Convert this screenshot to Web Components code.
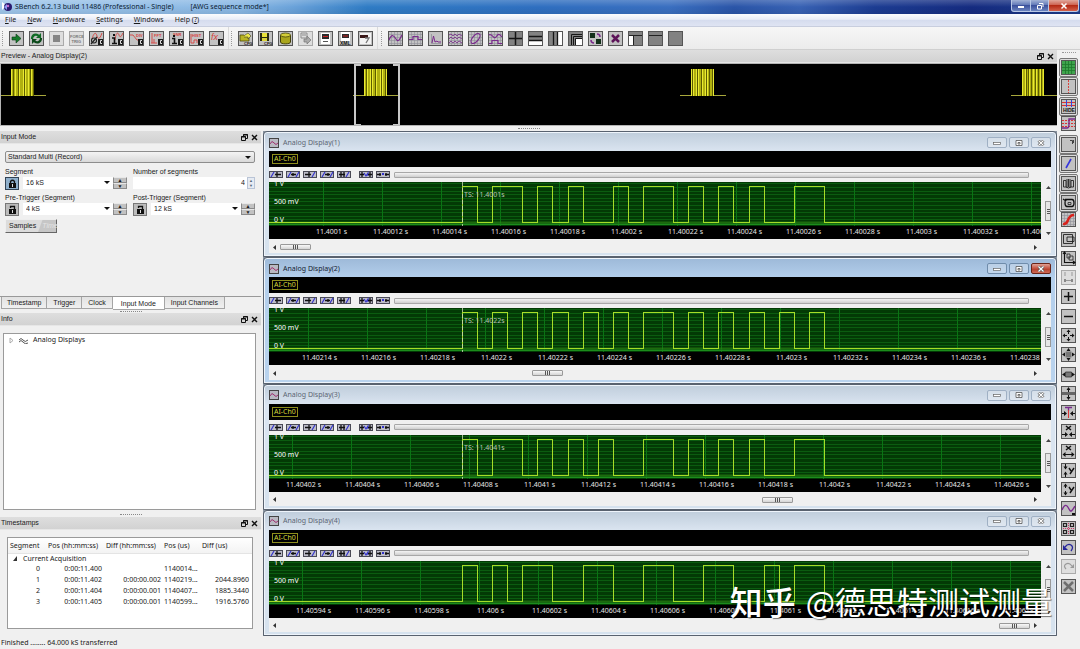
<!DOCTYPE html>
<html lang="en">
<head>
<meta charset="utf-8">
<title>SBench 6</title>
<style>
html,body{margin:0;padding:0}
body{font-family:"Noto Sans","Noto Sans CJK SC",sans-serif;font-size:7px;line-height:10px;color:#1a1a1a;background:#f0f0f0}
</style>
</head>
<body>
<sb-app></sb-app>
<script>
const BASE = `*{box-sizing:border-box}button,select,input{font:inherit;color:inherit;margin:0;padding:0;border:0;background:none;border-radius:0;outline:0}button{display:block}svg{display:block}`;
function define(name, html, setup){
  const tpl = document.createElement('template');
  customElements.define(name, class extends HTMLElement{
    constructor(){
      super();
      tpl.innerHTML = '<style>' + BASE + '</style>' + (typeof html === 'function' ? html(this) : html);
      this.attachShadow({mode:'open'}).append(tpl.content.cloneNode(true));
      if (setup) setup(this, this.shadowRoot);
    }
  });
}
const t = (x,y,s,c='#222',z=4,extra='') => `<text x="${x}" y="${y}" font-size="${z}" font-weight="700" fill="${c}" ${extra}>${s}</text>`;
const p = (d,c='#111',w=1,f='none') => `<path d="${d}" stroke="${c}" stroke-width="${w}" fill="${f}"/>`;
const r = (x,y,w,h,c='#111') => `<rect x="${x}" y="${y}" width="${w}" height="${h}" fill="${c}"/>`;
const mesh = p('M3.5 1V14M6.5 1V14M9.5 1V14M12.5 1V14M1 3.5H14M1 6.5H14M1 9.5H14M1 12.5H14','#8f8f98',.6);
const cbox = r(9,8,5,6,'#1c1c1c') + p('M13 9.500H11.500V12.500H13','#ddd',1);
const PUR='#7a2a8c', RED='#d8423e';
const ICONS = {
  play: p('M3 6H7V3L12 7.500L7 12V9H3Z','#0c3a14',.6,'#157a2a'),
  loop: p('M3 8C3 4 7 2 10 5','#0f6a24',2.200)+p('M12 2V7H7Z','none',0,'#0f6a24')+p('M12 7C12 11 8 13 5 10','#0b4a1a',2.200)+p('M3 13V8H8Z','none',0,'#0b4a1a'),
  stop: r(4,4,7,7,'#858585'),
  force: t(1,6.500,'FORCE','#777',4)+t(2.500,12,'TRIG','#777',4),
  osc: p('M3 8C5 1 7 1 8 5S11 8 13 2',RED,.9)+p('M2 13L8 6','#222',1.200)+'<circle cx="5" cy="9.500" r="2.500" fill="none" stroke="#222" stroke-width="1.100"/>'+cbox,
  info: p('M6 9C7 1 9 1 10 4S12 6 14 2',RED,.9)+r(4,3,2,2)+p('M3 7H5.500V12M3 12.500H8','#111',1.600)+cbox,
  div: p('M1 4H4L8 9H10',RED,.9)+t(7,5.500,'DIV',RED,4)+cbox,
  fft: p('M2 12H8M3 2V12M5 8V12',RED,.9)+t(5,6,'FFT',RED,4)+cbox,
  snr: t(4,5,'SNR',RED,4)+r(4,4,2,2)+p('M3 7.500H5.500V12M3 12.500H8','#111',1.600)+cbox,
  hist: t(3,5.500,'HIST',RED,4)+p('M2 3V12H5V9H8V12',RED,.9)+cbox,
  fx: `<text x="2" y="9" font-size="9" font-style="italic" fill="${RED}">fx</text>`+cbox,
  open: p('M2 4H6L7 5H11V10H2Z','#4c4a08',.8,'#b8b424')+p('M7 4L10 2L13 5L10 8V6H6','#222',.5,'#ebe84a')+t(6,13.500,'CFG','#111',4),
  save: r(2,2,9,8,'#2a2a10')+r(4,2,5,4,'#e8e23a')+r(4,7,5,3,'#dbd43a')+t(6,13.500,'CFG','#111',4),
  disk: '<path d="M2.500 4V11C2.500 13.500 12.500 13.500 12.500 11V4" fill="#a9a51c" stroke="#44420a"/><ellipse cx="7.500" cy="4" rx="5" ry="2" fill="#d3ce39" stroke="#44420a" stroke-width=".8"/>',
  send: p('M3 2H9V7H3ZM4 4H8','#8c8c8c')+p('M6 8H9V5L13 9L9 13V11H6Z','#777',.7,'#aaa'),
  doc: r(3,2,9,11,'#fff')+r(4,3,7,5,'#2b2b2b')+p('M5 5.500H10','#c22')+p('M5 10.500H10','#555'),
  xml: r(3,1,9,9,'#fff')+r(4,3,7,4,'#2b2b2b')+p('M5 5H10','#c22')+t(2,13.500,'XML','#111',5),
  exp: r(2,2,11,11,'#f3f3f3')+r(2,4,8,3,'#3a1818')+p('M7 7H11L8 12','#777',1.300),
  sine: mesh+p('M1 9C4 2 6 5 8 8S11 10 14 4',PUR,1.200),
  square: mesh+p('M1 8.500H5V5.500H10V8.500H14',PUR,1.200),
  spec: p('M3.500 3V12.500H13','#8a8a92',.7)+p('M4 12L5.500 5L7 11L9 10L10 11H13',PUR),
  noise: mesh+p('M1 4L3 3L5 5L7 3L9 5L11 3L14 5M1 8L3 6L5 8L7 6L9 8L11 6L14 8M1 12L3 10L5 12L7 10L9 12L11 10L14 12',PUR,.8),
  ellipse: mesh+'<ellipse cx="7.500" cy="7.500" rx="6" ry="3" transform="rotate(-50 7.500 7.500)" fill="none" stroke="#7a2a8c" stroke-width="1.200"/>',
  mixed: mesh+p('M1 4C4 2 6 9 8 6S11 2 14 6M1 12.500H4V9.500H10V12.500H14',PUR,1.200),
  quad: r(1,1,13,13,'#828282')+p('M7.500 1V14M1 7.500H14','#151515',1.500),
  rows: r(1,1,13,13,'#828282')+r(1,10,13,4,'#fff')+p('M1 5.500H14M1 9.500H14','#151515',1.300),
  cols: r(1,1,13,13,'#828282')+r(10,1,4,13,'#fff')+p('M5.500 1V14M9.500 1V14','#151515',1.300),
  casc: r(1,1,13,13,'#828282')+r(8,7,6,7,'#fff')+p('M3.500 14V3.500H14M5.500 14V5.500H14M7.500 14V7.500H14','#151515',1),
  swap: r(2,2,5,5,'#12301a')+r(8,8,5,5,'#12301a')+p('M9 3Q12 3 12 6M3 9Q3 12 6 12',PUR,1.500),
  close: p('M4 4L11 11M11 4L4 11','#5d1459',2.500),
  layl: r(1,1,13,13,'#828282')+r(1,5,4,9,'#fff')+p('M1 4.500H14M5.500 5V14','#222',1),
  layt: r(1,1,13,13,'#828282')+p('M1 4.500H14','#222',1),
  plain: r(1,1,13,13,'#828282'),
  grid: r(1,1,13,13,'#3fa34d')+p('M4.500 1V14M7.500 1V14M10.500 1V14M1 4.500H14M1 7.500H14M1 10.500H14','#1d7a2c',.8),
  cursor: '<path d="M7.500 1V14" stroke="#d8423e" stroke-dasharray="2 1"/>',
  hide: p('M1 3.500H14M1 6.500H14','#d33')+p('M5.500 1V8M10.500 1V8','#34d')+t(2,13,'HIDE','#111',5),
  thresh: '<path d="M1 4.500H14M1 7.500H14M1 10.500H14" stroke="#d33" stroke-dasharray="2 1"/>'+p('M1 12H6Q8 12 8 8V3H14',PUR,1.400),
  note: p('M9 3.500H11.500V7M12.500 3V6','#333',.9),
  slope: p('M5 12L10 3','#3434dd',1.600),
  book: p('M2.500 4.500H5V11H2.500ZM10 4.500H12.500V11H10ZM6 3V12M9 3V12M5 11Q7.500 13 10 11M7.500 3V11','#222',.9),
  cam: p('M2 4L5 6M4 4.500H11Q13 4.500 13 8T11 11.500H6Q4 11.500 4 8T6 5','#111',1.300)+p('M7 7.500H10V9.500H7Z','#222',.8),
  sred: mesh+p('M2 12C9 13 5 3 13 3','#d8231d',2.500),
  frame: p('M2.500 2.500H11.500V11.500H2.500ZM6 5H13V9.500H6Z','#222',.9),
  axes: p('M3.500 1V11.500H14M2 3L3.500 1L5 3M12 10L14 11.500L12 13','#111',1.100)+p('M6 3H9V7H6ZM9 5H12V9H8V5','#222',.8),
  dim: p('M4 2V6M11 2V6M3 10.500H12','#999')+r(3,9,2,3,'#888')+r(10,9,2,3,'#888'),
  plus: p('M7.500 3V12M3 7.500H12','#111',1.500),
  minus: p('M3 7.500H12','#111',1.500),
  move: p('M7.500 3V6M7.500 9V12M3 7.500H6M9 7.500H12','#111',1)+p('M5.500 4L7.500 1.500L9.500 4ZM5.500 11L7.500 13.500L9.500 11ZM4 5.500L1.500 7.500L4 9.500ZM11 5.500L13.500 7.500L11 9.500Z','none',0,'#111'),
  fit: r(4.500,4.500,6,6,'#777')+p('M5.500 4L7.500 1L9.500 4ZM5.500 11L7.500 14L9.500 11ZM4 5.500L1 7.500L4 9.500ZM11 5.500L14 7.500L11 9.500Z','none',0,'#111'),
  fith: r(4.500,5,6,5,'#777')+p('M4.500 5H10.500V10H4.500Z','#222',.7)+p('M4 5.500L1 7.500L4 9.500ZM11 5.500L14 7.500L11 9.500Z','none',0,'#111'),
  fitv: r(1,6,13,3,'#666')+p('M7.500 2V6M7.500 9V13','#111')+p('M5.500 4L7.500 1L9.500 4ZM5.500 11L7.500 14L9.500 11Z','none',0,'#111'),
  trig: p('M4 2.500H11M7.500 2V6',PUR,1.300)+p('M7.500 5V13','#d33')+p('M1 8H3V6L6 8.500L3 11V9H1ZM14 8H12V6L9 8.500L12 11V9H14Z','none',0,'#111'),
  xin: p('M5 2L10 6M10 2L5 6','#111',1.500)+p('M1 10.500H6M9 10.500H14','#111',1)+p('M4 8L7 10.500L4 13ZM11 8L8 10.500L11 13Z','none',0,'#111'),
  xout: p('M5 2L10 6M10 2L5 6','#111',1.500)+p('M3 10.500H12','#111',1)+p('M4.500 8L1.500 10.500L4.500 13ZM10.500 8L13.500 10.500L10.500 13Z','none',0,'#111'),
  yin: p('M8 5L10 8M13 5L9 11','#111',1.400)+p('M4.500 1V6M4.500 9V14','#111',1)+p('M2.500 3.500L4.500 6.500L6.500 3.500ZM2.500 11.500L4.500 8.500L6.500 11.500Z','none',0,'#111'),
  yout: p('M8 5L10 8M13 5L9 11','#111',1.400)+p('M4.500 2V6M4.500 9V13','#111',1)+p('M2.500 4.500L4.500 1.500L6.500 4.500ZM2.500 10.500L4.500 13.500L6.500 10.500Z','none',0,'#111'),
  wave: p('M1 9C4 2 6 4 8 8S11 10 14 5',PUR,1.400)+r(11,12,3,2),
  group: p('M2.500 2.500H5.500V5.500H2.500ZM9.500 2.500H12.500V5.500H9.500ZM2.500 9.500H5.500V12.500H2.500ZM9.500 9.500H12.500V12.500H9.500Z','#222',1.200)+'<path d="M7.500 2V13M2 7.500H13" stroke="#c36" stroke-dasharray="1 1"/>',
  undo: p('M4 7Q7 3 10 5T10 11','#25259a',1.300)+p('M2 5V10H7Z','none',0,'#25259a'),
  redo: p('M11 7Q8 3 5 5T5 10','#999',1.200)+p('M13 5V9H9Z','none',0,'#999'),
  cross: p('M3 3L12 12M12 3L3 12','#6e6e6e',2.500)
};
const DISABLED = ['stop','force','send','dim','redo'];
define('sb-icon', el => {
  const n = el.getAttribute('name'), d = DISABLED.includes(n), on = el.hasAttribute('pressed');
  return `<style>:host{display:block}button{width:${on?19:15}px;height:${on?19:15}px;${on?'border:1px solid #777;border-radius:2px;background:#dcdcdc;padding:1px':''}}</style>
  <button aria-label="${n}"><svg width="15" height="15" viewBox="0 0 15 15" font-family="Liberation Sans, sans-serif"><rect x=".5" y=".5" width="14" height="14" fill="${d?'#dedede':'#c2c2c2'}" stroke="${d?'#aaa':'#555'}"/>${ICONS[n]}</svg></button>`;
});
const icons = (s) => s.trim().split(/\s+/).map(n => `<sb-icon name="${n.replace('*','')}" ${n.includes('*')?'pressed':''}></sb-icon>`).join('');

define('sb-titlebar', `<style>
:host{display:flex;height:14px;align-items:center;padding-left:2px;background:linear-gradient(#fff3,#fff0 50%,#0001),linear-gradient(90deg,#9fc6ea,#8ab8e4 22%,#6ba3da 27%,#2f7cc5 34%,#2f6fc0 50%,#3a6fc0 62%,#2a55a8 68%,#3862b4 74%,#1c3c92 81%,#152b80 90%,#1c3c8c)}
h1{font:inherit;margin:0;flex:1;display:flex;gap:17px;color:#0c1c33;white-space:pre;padding-left:3px}
div{display:flex;align-self:flex-start;margin-right:1px}
button{width:18px;height:12px;border:1px solid #b9c8e6;border-top:0;background:linear-gradient(#a3b3d6,#5a72b4 50%,#3b519c 50%,#6b84c0)}
button+button{border-left:0}button:first-child{border-radius:0 0 0 3px;width:20px}
button:last-child{width:30px;border-radius:0 0 3px 0;background:linear-gradient(#e0a79c,#cb5b49 50%,#b42b16 50%,#d2604a)}
button svg{margin:auto}
</style>
<svg width="10" height="10" viewBox="0 0 10 10"><path d="M0 0L4 3L2 6L0 8Z" fill="#fff"/><circle cx="6" cy="5" r="4" fill="#2a1a70"/><path d="M2 5L5 2L5 8Z" fill="#8d9cf0"/><circle cx="6" cy="4" r="1.200" fill="#c46dd0"/></svg>
<h1><span>SBench 6.2.13 build 11486 (Professional - Single)</span><span>[AWG sequence mode*]</span></h1>
<div><button aria-label="Minimize"><svg width="8" height="8"><rect x="1" y="4" width="6" height="2" fill="#fff"/></svg></button><button aria-label="Restore"><svg width="8" height="8"><path d="M3 1.500H7V5M1.500 3.500H5.500V7H1.500Z" fill="none" stroke="#fff"/></svg></button><button aria-label="Close"><svg width="8" height="8"><path d="M1.500 1.500L6.500 6.500M6.500 1.500L1.500 6.500" stroke="#fff" stroke-width="1.500"/></svg></button></div>`);

define('sb-menubar', `<style>
:host{display:flex;height:13px;align-items:center;gap:11px;padding-left:5px;background:linear-gradient(#fbfcfe,#e9edf7 45%,#d5dcee 50%,#dfe4f3);border-bottom:1px solid #c8cede}
u{text-underline-offset:1px}</style>
<button><u>F</u>ile</button><button><u>N</u>ew</button><button><u>H</u>ardware</button><button><u>S</u>ettings</button><button><u>W</u>indows</button><button>Help (<u>?</u>)</button>`);

define('sb-toolbar', `<style>
:host{display:flex;height:23px;align-items:center;padding-right:2px;background:linear-gradient(#f6f6f6,#ebebeb);border-bottom:1px solid #cfcfcf}
div{display:flex;gap:5px;align-items:center;padding:0 4px 0 2px;height:100%;border-right:1px solid #dadada}
div::before{content:"";width:1px;height:15px;border-left:1px dotted #999}
div:last-child{border:0;padding-left:3px}</style>
<div>${icons('play loop stop force osc info div fft snr hist fx')}</div><div>${icons('open save disk send doc xml exp')}</div><div>${icons('sine square spec noise ellipse mixed quad rows cols casc swap close layl layt plain')}</div>`);

define('sb-sidebar', `<style>
:host{display:block;background:#f0f0f0;padding-top:2px}
nav{display:flex;flex-direction:column;height:536px;justify-content:space-between;align-items:center}
span{display:grid;place-items:center;height:15px}
i{display:block;width:14px;border-top:1px dotted #999;margin:0 auto 5px}</style><i></i><nav>${
'grid* cursor* hide* thresh note* slope* book* cam* sred frame axes dim plus minus move fit fith fitv trig xin xout yin yout wave group undo redo cross'.split(' ').map(n=>'<span>'+icons(n)+'</span>').join('')}</nav>`);

define('sb-dock', el => `<style>
:host{display:flex;flex-direction:column;min-width:0}
header{display:flex;height:13px;align-items:center;padding:0 3px 0 1px;gap:3px;background:linear-gradient(#dedede,#d2d2d2);border-bottom:1px solid #e6e6e6;font-family:"Liberation Sans",sans-serif}
h2{font:inherit;margin:0;flex:1}</style>
<header><h2>${el.getAttribute('label')}</h2><button aria-label="Float"><svg width="7" height="7"><path d="M2.500 2V.5H6.500V4.500H5M.5 2.500H4.500V6.500H.5ZM0 3H5M2 1H7" fill="none" stroke="#111"/></svg></button><button aria-label="Close"><svg width="7" height="7"><path d="M1 1L6 6M6 1L1 6" stroke="#111" stroke-width="1.400"/></svg></button></header><slot></slot>`);

define('sb-preview', () => {
  const burst = (x, bits) => {
    let s = `<path d="M-11 31.500H35" stroke="#a8a83c"/>`;
    [...bits].forEach((b,i) => { s += `<rect x="${i}" y="5" width="1" height="27" fill="${b==='2'?'#eaea32':b==='1'?'#b0b010':'#5c5c00'}"/>`; });
    return `<svg x="${x}%" y="0" overflow="visible">${s}</svg>`;
  };
  return `<style>:host{display:block;background:#000;border:1px solid #b4b4b4;border-width:1px 0 1px 1px}svg{shape-rendering:crispEdges}</style>
  <svg width="100%" height="61">${burst(.95,'21012110211120211210210')}${burst(34.400,'21021120211021112021102')}${burst(65.300,'20211202110211202101102')}${burst(96.700,'2112010210121021012012')}
  <svg x="33.400%" overflow="visible"><path d="M7 .5H1V60.500H7M39 .5H45V60.500H39" fill="none" stroke="#c8c8c8" stroke-width="2"/></svg></svg>`;
});

const lock = open => `<button class="lock ${open?'':'on'}" aria-label="Lock"><svg width="9" height="10"><rect x="1" y="4" width="7" height="5" fill="#111"/><path d="${open?'M2.500 3V1.500H6.500V5':'M2.500 5V2.500Q4.500 0 6.500 2.500V5'}" fill="none" stroke="#111" stroke-width="1.300"/><rect x="4" y="5" width="1" height="3" fill="#ddd"/></svg></button>`;
const combo = (id,label,val,open) => `<div class="field"><label for="${id}">${label}</label><div class="row">${lock(open)}<span class="sel"><select id="${id}"><option>${val}</option></select></span><span class="spin"><button aria-label="Up">▲</button><button aria-label="Down">▼</button></span></div></div>`;
define('sb-input-mode', `<style>
:host{display:flex;flex-direction:column;flex:1;padding:7px 6px 0 5px;font-family:"Liberation Sans",sans-serif}
.mode{display:block;width:100%;height:12px;border:1px solid #8d8d8d;border-radius:2px;background:linear-gradient(#f4f4f4,#d9d9d9)}
select{appearance:none;width:100%;height:100%;display:block;padding:0 0 0 2px;line-height:10px}
.mode,.sel{position:relative}
.mode::after,.sel::after{content:"";position:absolute;right:3px;top:4px;border:3px solid transparent;border-top-color:#111;border-bottom:0;pointer-events:none}
.grid{display:grid;grid-template-columns:1fr 1fr;gap:3px 6px;padding-top:4px}
label{display:block;height:9px;line-height:9px;white-space:nowrap}
.row{display:flex;height:14px;padding:1px 0}
.lock{width:14px;height:13px;border:1px solid #777;background:#bcbcbc;display:grid;place-items:center}
.lock.on{background:#8fb0cc;border-color:#345}
.sel{flex:1;background:#fff;margin-left:4px;height:12px}
.sel select{padding-left:3px}
.spin{display:grid;width:14px;grid-template-rows:6px 6px}
.spin button{font-size:5px;line-height:5px;background:#c2c2c2;border:1px solid #8a8a8a;border-top-color:#e8e8e8}
.num{display:flex;background:#fff;height:12px;margin-top:1px}
.num input{flex:1;min-width:0;text-align:right}
.num span{width:8px;margin-left:2px;background:#e6ebf3;border:1px solid #b9c4d6;font-size:4px;line-height:5px;text-align:center;color:#567;overflow:hidden}
.samples{display:flex;align-items:center;width:52px;height:14px;padding-left:3px;margin-top:3px;background:linear-gradient(110deg,#dcdcdc 66%,#c6c6c6 68%);border:1px solid #eee;border-right-color:#666;border-bottom-color:#666;gap:6px}
.samples i{color:#e4e4e4}
</style>
<span class="mode"><select aria-label="Mode"><option>Standard Multi (Record)</option></select></span>
<div class="grid">${combo('seg','Segment','16 kS',false)}
<div class="field"><label for="n">Number of segments</label><div class="num"><input id="n" value="4"><span>▲<br>▼</span></div></div>
${combo('pre','Pre-Trigger (Segment)','4 kS',true)}${combo('post','Post-Trigger (Segment)','12 kS',true)}</div>
<button class="samples">Samples <i>Time</i></button>`);

define('sb-tabs', `<style>
:host{display:flex;height:14px;border-top:1px solid #999;padding-left:1px;align-items:flex-start;font-family:"Liberation Sans",sans-serif}
button{height:12px;border:1px solid #a5a5a5;border-top:0;background:linear-gradient(#e2e2e2,#f0f0f0);padding:0 5px;white-space:nowrap}
button+button{border-left:0;padding:0 6px}
button[aria-selected=true]{background:#fff;height:13px;padding:1px 8px 0}</style>
<button role="tab">Timestamp</button><button role="tab">Trigger</button><button role="tab">Clock</button><button role="tab" aria-selected="true">Input Mode</button><button role="tab">Input Channels</button>`);

define('sb-splitter', `<style>:host{display:flex;justify-content:center;align-items:center;height:5px}i{width:22px;border-top:1px dotted #888}</style><i></i>`);

define('sb-tree', `<style>:host{display:block;flex:1;margin:7px 5px 2px 3px;border:1px solid #9a9a9a;background:#fff;padding:1px 5px}
div{display:flex;align-items:center;gap:5px}</style>
<div role="treeitem"><svg width="5" height="7"><path d="M1 1L4 3.500L1 6Z" fill="none" stroke="#999" stroke-width=".8"/></svg><svg width="9" height="7"><path d="M0 3Q2 0 4 3T9 3M0 5Q2 2 4 5T9 6" fill="none" stroke="#555"/></svg>Analog Displays</div>`);

define('sb-timestamps', `<style>:host{display:block;margin:7px 8px 7px 7px;border:1px solid #9a9a9a;background:#fff;height:92px}
table{border-collapse:collapse;width:100%;table-layout:fixed}
th{font-weight:400;text-align:left;height:15px;padding:2px 0 0 2px;background:linear-gradient(#fff,#f3f3f3);white-space:nowrap;border-bottom:1px solid #e4e4e4}
td{height:11px;padding:0;text-align:right;line-height:10px}
td:nth-child(2){padding-right:2px}td:nth-child(3){padding-right:1px}
td.l{text-align:left;padding-left:2px}.g{text-align:left;padding-left:5px;height:10px}
.g svg{display:inline-block;margin-right:5px}td:first-child{padding-right:6px}td:last-child{padding-right:3px}</style>
<table><colgroup><col style="width:38px"><col style="width:58px"><col style="width:58px"><col style="width:38px"><col></colgroup>
<thead><tr><th>Segment</th><th>Pos (hh:mm:ss)</th><th>Diff (hh:mm:ss)</th><th>Pos (us)</th><th>Diff (us)</th></tr></thead>
<tbody><tr><td class="g" colspan="5"><svg width="5" height="5"><path d="M0 5L4 0V5Z" fill="#333"/></svg>Current Acquisition</td></tr>
<tr><td>0</td><td>0:00:11.400</td><td></td><td class="l">1140014...</td><td></td></tr>
<tr><td>1</td><td>0:00:11.402</td><td>0:00:00.002</td><td class="l">1140219...</td><td>2044.8960</td></tr>
<tr><td>2</td><td>0:00:11.404</td><td>0:00:00.001</td><td class="l">1140407...</td><td>1885.3440</td></tr>
<tr><td>3</td><td>0:00:11.405</td><td>0:00:00.001</td><td class="l">1140599...</td><td>1916.5760</td></tr></tbody></table>`);

const nav = (d) => `<button aria-label="Jump"><svg width="14" height="7"><rect x=".5" y=".5" width="13" height="6" fill="#bdbdc8" stroke="#4a4a55"/>${d}</svg></button>`;
const NAV = [
  p('M2 6L5 1','#33c',1.200)+p('M6 3.500H12M8 1V6','#111',1.300),
  p('M2 6L5 1M10 6L13 1','#33c',1.200)+p('M5 3.500H10M7 2V5','#111',1.300),
  p('M9 6L12 1','#33c',1.200)+p('M2 3.500H8M6 1V6','#111',1.300),
  p('M2 6L5 1M10 6L13 1','#33c',1.200)+p('M5 3.500H10M8 2V5','#111',1.300),
  p('M9 6L12 1','#33c',1.200)+p('M2 3.500H8M4 1V6M7 1V6','#111',1.300),
  p('M5 2L7 5L9 2V5','#33c',1.200)+p('M1 3.500H5M9 3.500H13M3 1V6M11 1V6','#111',1.300),
  r(6,2,2,2,'#33c')+p('M1 3.500H5M9 3.500H13M4 2V5M10 2V5','#111',1.300)];

define('sb-display', el => {
  const a = k => el.getAttribute(k), gx = +a('grid'), on = el.hasAttribute('active');
  let lines = '', minor = '';
  for (let i = 0; i < 40; i++) lines += `M${gx + i*59} 0V44`;
  for (let i = -1; i < 12; i++) minor += `M0 ${Math.round(5 + i*3.6)+.5}H3000`;
  let d = 'M0 40.500H193.500', cur = '0';
  [...a('bits') + '0'].forEach((b,i) => { if (b !== cur) { d += `H${Math.round(193 + i*15.083)+.5}V${b==='1'?4.500:40.500}`; cur = b; } });
  d += 'H3000';
  const ts = a('ts');
  const s = +a('scroll');
  return `<style>
:host{display:flex;flex-direction:column;min-width:0;padding:0 5px 3px;border:1px solid #59626f;border-radius:4px 4px 0 0;box-shadow:inset 0 0 0 1px #eef4fb;background:${on?'linear-gradient(#9db9d8,#b4cfec 20px,#b9d3ee)':'linear-gradient(#bfcddb,#dbe5f1 20px,#d6e2ee)'}}
header{display:flex;align-items:center;height:19px;padding-top:2px;gap:4px;color:${on?'#14202e':'#5c6673'}}
h2{font:inherit;margin:0;flex:1}
header div{display:flex;gap:2px}
header button{width:20px;height:11px;border:1px solid ${on?'#6f8cab':'#9fb0c4'};border-radius:2px;background:#ffffff40;display:grid;place-items:center}
header .x{${on?'background:linear-gradient(#e0a296,#c3513f 50%,#b13a26 50%,#cf6b57);border-color:#6b2418':''}}
.ch{background:#000;height:16px;padding:3px}
.ch span{display:inline-block;vertical-align:top;border:1px solid #8e8e1c;color:#d8d83c;height:10px;line-height:8px;padding:0 1px}
.body{background:#f0f0f0;flex:1;display:flex;flex-direction:column}
.nav{display:flex;gap:3px;height:15px;align-items:center;padding-right:22px}
.nav button:nth-child(6){margin-left:5px}
.nav hr{flex:1;height:6px;margin:0 0 0 1px;border:1px solid #a8a8a8;border-radius:1px;background:linear-gradient(#f4f4f4,#cfcfcf)}
.mid{display:flex}
.plot{flex:1;min-width:0;background:#000;color:#e6e6e6;overflow:hidden;height:57px}
.axis{display:flex;padding-left:${a('off')}px;line-height:11px}
.axis span{flex:0 0 59px;text-align:center;white-space:nowrap}
.vs{width:10px;display:flex;flex-direction:column;align-items:center;justify-content:space-between;padding:3px 0 3px 4px}
.hs{display:flex;flex:1;align-items:center;padding:2px 13px 0 3px;gap:2px}
.th{width:31px;height:6px;border:1px solid #999;border-radius:1px;background:linear-gradient(#f8f8f8,#d4d4d4);display:grid;place-items:center}
</style>
<header><svg width="10" height="10"><rect x=".5" y=".5" width="9" height="9" fill="#b9b9c2" stroke="#444"/><path d="M1 6Q3 2 5 5T9 5" fill="none" stroke="#a03070"/></svg><h2>${a('label')}</h2>
<div><button aria-label="Minimize"><svg width="8" height="6"><rect x=".5" y="2.500" width="7" height="2" fill="#fff" stroke="#666" stroke-width=".7"/></svg></button><button aria-label="Maximize"><svg width="8" height="6"><path d="M1 .5H7V5.500H1ZM3 2.500H5V4H3Z" fill="#fff" stroke="#555" stroke-width=".8"/></svg></button><button class="x" aria-label="Close"><svg width="8" height="6"><path d="M1.500 .5L6.500 5.500M6.500 .5L1.500 5.500" stroke="#555" stroke-width="2.600"/><path d="M1.500 .5L6.500 5.500M6.500 .5L1.500 5.500" stroke="#fff" stroke-width="1.200"/></svg></button></div></header>
<div class="body"><div class="ch"><span>AI-Ch0</span></div>
<div class="nav">${NAV.map(nav).join('')}<hr></div>
<div class="mid"><div class="plot"><svg width="100%" height="44" font-family="Noto Sans, sans-serif" font-size="7" fill="#fff">
<rect width="100%" height="44" fill="#033a05"/><path d="${minor}" stroke="#0b5c10" shape-rendering="crispEdges"/><path d="${lines}" stroke="#0a7414" shape-rendering="crispEdges"/><path d="M0 42.500H3000" stroke="#1c8c1c"/>
<path d="M0 40.500H3000" stroke="#2f8a14" stroke-width="2" opacity=".6"/>
<path d="${d}" fill="none" stroke="#a6dc28" shape-rendering="crispEdges"/>
${ts?`<path d="M193.500 0V44" stroke="#c9d6b4" stroke-dasharray="4 2" opacity=".8"/><text x="195" y="15" fill="#b6c4b0">TS: ${ts}s</text>`:''}
<text x="5" y="4">1 V</text><text x="5" y="22">500 mV</text><text x="5" y="40">0 V</text></svg>
<div class="axis">${a('ticks').split(' ').map(v=>`<span>${v} s</span>`).join('')}</div></div>
<div class="vs"><svg width="5" height="4"><path d="M0 4L2.500 1L5 4Z" fill="#444"/></svg><svg width="6" height="20"><rect x=".5" y=".5" width="5" height="19" fill="#e6e6e6" stroke="#999"/><path d="M2 8.500H5M2 10.500H5M2 12.500H5" stroke="#555"/></svg><svg width="5" height="4"><path d="M0 0L2.500 3L5 0Z" fill="#444"/></svg></div></div>
<div class="hs"><svg width="4" height="5"><path d="M4 0L1 2.500L4 5Z" fill="#333"/></svg><i style="flex:${s}"></i><span class="th"><svg width="7" height="4"><path d="M1.500 0V4M3.500 0V4M5.500 0V4" stroke="#555"/></svg></span><i style="flex:${100-s}"></i><svg width="4" height="5"><path d="M0 0L3 2.500L0 5Z" fill="#333"/></svg></div></div>`;
});

define('sb-watermark', `<style>:host{position:absolute;right:28px;bottom:25px;display:flex;align-items:center;gap:10px;color:#fff;font:31px/46px "Noto Sans CJK SC",sans-serif;text-shadow:1px 1px 1px #0008;pointer-events:none;white-space:nowrap}b{font-size:33px;font-weight:500}</style><b>知乎</b><span>@德思特测试测量</span>`);

define('sb-app', `<style>
:host{display:flex;flex-direction:column;min-height:100vh;position:relative}
main{flex:1;display:grid;grid-template-columns:minmax(0,1fr) 23px}
.work{display:flex;flex-direction:column;min-width:0}
.split{flex:1;display:grid;grid-template-columns:261px minmax(0,1fr);gap:2px}
.left{display:flex;flex-direction:column}
.in{height:165px}
.mdi{display:grid;grid-template-rows:repeat(4,1fr);background:#8c96a2}
footer{height:13px;padding:2px 1px 0}
.info{flex:1}
</style>
<sb-titlebar></sb-titlebar><sb-menubar></sb-menubar><sb-toolbar></sb-toolbar>
<main><div class="work"><sb-dock label="Preview - Analog Display(2)"><sb-preview></sb-preview></sb-dock><sb-splitter></sb-splitter>
<div class="split"><div class="left">
<sb-dock class="in" label="Input Mode"><sb-input-mode></sb-input-mode></sb-dock><sb-tabs></sb-tabs>
<sb-splitter style="height:3px"></sb-splitter><sb-dock class="info" label="Info"><sb-tree></sb-tree></sb-dock><sb-splitter></sb-splitter>
<sb-dock label="Timestamps"><sb-timestamps></sb-timestamps></sb-dock></div>
<div class="mdi">
<sb-display label="Analog Display(1)" grid="54.5" off="33" scroll="0" ts="11.4001" bits="101101010010110101010011" ticks="11.4001 11.40012 11.40014 11.40016 11.40018 11.4002 11.40022 11.40024 11.40026 11.40028 11.4003 11.40032 11.40034"></sb-display>
<sb-display active label="Analog Display(2)" grid="39.5" off="21" scroll="35" ts="11.4022" bits="101010101010110101010101" ticks="11.40214 11.40216 11.40218 11.4022 11.40222 11.40224 11.40226 11.40228 11.4023 11.40232 11.40234 11.40236 11.40238"></sb-display>
<sb-display label="Analog Display(3)" grid="23.5" off="5" scroll="67" ts="11.4041" bits="101101010100110101010011" ticks="11.40402 11.40404 11.40406 11.40408 11.4041 11.40412 11.40414 11.40416 11.40418 11.4042 11.40422 11.40424 11.40426"></sb-display>
<sb-display label="Analog Display(4)" grid="33.5" off="15" scroll="100" bits="101011001100110011001011" ticks="11.40594 11.40596 11.40598 11.406 11.40602 11.40604 11.40606 11.40608 11.4061 11.40612 11.40614 11.40616 11.40618"></sb-display>
</div></div></div><sb-sidebar></sb-sidebar></main>
<footer>Finished ........ 64.000 kS transferred</footer><sb-watermark></sb-watermark>`);
</script>
</body>
</html>
